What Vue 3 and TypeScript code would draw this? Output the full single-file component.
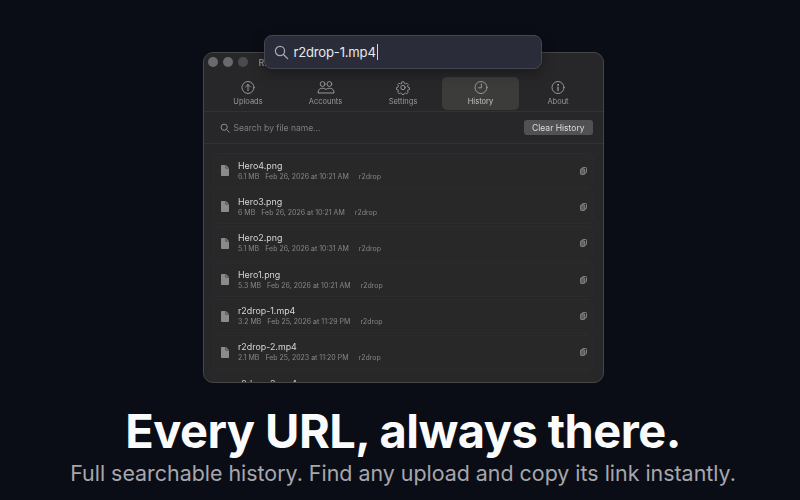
<template>
  <div class="page">
    <div class="stage">
      <div class="spotlight">
        <svg class="spot-icon" width="15" height="15" viewBox="0 0 15 15" fill="none">
          <circle cx="6" cy="6" r="4.6" stroke="#a9abb3" stroke-width="1.2" />
          <path d="M9.5 9.5 13.6 13.6" stroke="#a9abb3" stroke-width="1.3" stroke-linecap="round" />
        </svg>
        <span class="spot-text">r2drop-1.mp4</span><span class="caret"></span>
      </div>

      <div class="window">
        <div class="titlebar">
          <span class="dot"></span>
          <span class="dot"></span>
          <span class="dot dim"></span>
          <span class="win-title">R2Drop</span>
        </div>

        <div class="tabs">
          <div v-for="tab in tabs" :key="tab.label" class="tab" :class="{ active: tab.label === 'History' }">
            <svg width="20" height="15" viewBox="0 0 20 15" fill="none" stroke="#a3a3a5" stroke-width="0.9" stroke-linecap="round" stroke-linejoin="round">
              <template v-if="tab.label === 'Uploads'">
                <circle cx="10" cy="7.5" r="6" />
                <path d="M10 10.8V4.6M7.6 6.9 10 4.5l2.4 2.4" />
              </template>
              <template v-else-if="tab.label === 'Accounts'">
                <circle cx="6.6" cy="4" r="2.4" />
                <circle cx="13.4" cy="4" r="2.4" />
                <path d="M2 12.6c0-3 2-4.4 4.6-4.4 1.4 0 2.6.4 3.4 1.3.8-.9 2-1.3 3.4-1.3 2.6 0 4.6 1.4 4.6 4.4z" />
              </template>
              <template v-else-if="tab.label === 'Settings'">
                <circle cx="10" cy="7.5" r="2.2" />
                <path d="M8.9 1.2h2.2l.4 1.7 1.3.6 1.6-.8 1.5 1.6-.9 1.5.5 1.3 1.7.5v2.1l-1.7.5-.5 1.2.8 1.5-1.5 1.5-1.5-.8-1.3.5-.4 1.2H8.9l-.4-1.2-1.3-.5-1.5.8-1.5-1.5.8-1.5-.5-1.2-1.7-.5V7.6l1.7-.5.5-1.3-.9-1.5 1.5-1.6 1.6.8 1.3-.6z" transform="translate(1 .75) scale(.9)" />
              </template>
              <template v-else-if="tab.label === 'History'">
                <circle cx="10" cy="7.5" r="6" />
                <path d="M10.4 3.9v3.9H7.6" />
              </template>
              <template v-else>
                <circle cx="10" cy="7.5" r="6" />
                <path d="M10 7v3.6" stroke-width="1.2" />
                <circle cx="10" cy="4.8" r=".5" fill="#a3a3a5" />
              </template>
            </svg>
            <span class="tab-label">{{ tab.label }}</span>
          </div>
        </div>

        <div class="searchbar">
          <svg width="10" height="10" viewBox="0 0 10 10" fill="none" stroke="#8f8f91" stroke-width="1">
            <circle cx="4.2" cy="4.2" r="3.1" />
            <path d="M6.5 6.5 9.2 9.2" stroke-linecap="round" />
          </svg>
          <span class="search-hint">Search by file name...</span>
          <span class="clear-btn">Clear History</span>
        </div>

        <div class="list">
          <div v-for="file in files" :key="file.name" class="row">
            <svg class="file-icon" width="8" height="11" viewBox="0 0 8 11">
              <path d="M.8 0H5l3 3v7.2a.8.8 0 0 1-.8.8H.8a.8.8 0 0 1-.8-.8V.8A.8.8 0 0 1 .8 0z" fill="#8b8b8d" />
              <path d="M4.8 0v3.2H8" fill="none" stroke="#3a3a3c" stroke-width=".7" />
            </svg>
            <div class="file-info">
              <div class="file-name">{{ file.name }}</div>
              <div class="file-meta">
                <span>{{ file.size }}</span>
                <span>{{ file.date }}</span>
                <span class="bucket">r2drop</span>
              </div>
            </div>
            <svg class="copy-icon" width="7" height="8" viewBox="0 0 8 9">
              <rect x="2.6" y="0.5" width="4.9" height="6.2" rx="1" fill="none" stroke="#909092" stroke-width="1" />
              <rect x="0.5" y="2" width="5" height="6.5" rx="1" fill="#5f5f62" stroke="#9a9a9c" stroke-width=".8" />
            </svg>
          </div>
        </div>
      </div>
    </div>

    <h1 class="headline">Every URL, always there.</h1>
    <p class="subline">Full searchable history. Find any upload and copy its link instantly.</p>
  </div>
</template>

<script setup lang="ts">
const tabs = [
  { label: 'Uploads' },
  { label: 'Accounts' },
  { label: 'Settings' },
  { label: 'History' },
  { label: 'About' },
];

const files = [
  { name: 'Hero4.png', size: '6.1 MB', date: 'Feb 26, 2026 at 10:21 AM' },
  { name: 'Hero3.png', size: '6 MB', date: 'Feb 26, 2026 at 10:21 AM' },
  { name: 'Hero2.png', size: '5.1 MB', date: 'Feb 26, 2026 at 10:31 AM' },
  { name: 'Hero1.png', size: '5.3 MB', date: 'Feb 26, 2026 at 10:21 AM' },
  { name: 'r2drop-1.mp4', size: '3.2 MB', date: 'Feb 25, 2026 at 11:29 PM' },
  { name: 'r2drop-2.mp4', size: '2.1 MB', date: 'Feb 25, 2023 at 11:20 PM' },
  { name: 'r2drop-3.mp4', size: '2.1 MB', date: 'Feb 25, 2023 at 11:20 PM' },
];
</script>

<style>
html, body { margin: 0; background: #0b0d16; }
</style>

<style scoped>
.page { width: 800px; height: 500px; overflow: hidden; background: #0b0d16; font-family: Inter, "Liberation Sans", sans-serif; display: flex; flex-direction: column; align-items: center; padding-left: 6px; box-sizing: border-box; }

.stage { position: relative; width: 401px; padding-top: 52px; }

.spotlight { position: absolute; z-index: 2; top: 35px; left: 61px; width: 278px; height: 34px; box-sizing: border-box; display: flex; align-items: center; padding-left: 9px; background: #2b2c39; border: 1px solid #45464f; border-radius: 8px; box-shadow: 0 4px 14px rgba(0, 0, 0, 0.35); }
.spot-icon { margin-right: 5px; }
.spot-text { font-size: 13.1px; letter-spacing: -0.2px; color: #e8e8ea; }
.caret { width: 1px; height: 16px; margin-left: 1px; background: #d8d8dc; }

.window { height: 331px; box-sizing: border-box; overflow: hidden; background: #272729; border: 1px solid #47474a; border-radius: 10px; filter: blur(0.3px); }

.titlebar { height: 18px; display: flex; align-items: center; gap: 5px; padding-left: 4px; }
.dot { width: 10px; height: 10px; border-radius: 50%; background: #6a6a6c; }
.dot.dim { background: #4b4b4d; }
.win-title { margin-left: 6px; font-size: 9px; font-weight: 600; color: #8a8a8c; }

.tabs { height: 41px; box-sizing: border-box; display: flex; justify-content: center; gap: 1px; padding: 6px 0 1px; border-bottom: 1px solid #323234; }
.tab { width: 76.5px; box-sizing: border-box; padding-bottom: 2px; display: flex; flex-direction: column; align-items: center; justify-content: center; gap: 2px; border-radius: 5px; }
.tab.active { background: #3c3d3a; }
.tab-label { font-size: 7.5px; color: #99999b; }
.tab.active .tab-label { color: #c3c3c5; }

.searchbar { height: 32px; box-sizing: border-box; display: flex; align-items: center; padding: 0 10px 0 16px; border-bottom: 1px solid #323234; }
.search-hint { margin-left: 4px; flex: 1; font-size: 8.5px; color: #7f7f81; }
.clear-btn { height: 15px; padding: 0 8px; display: flex; align-items: center; border-radius: 3px; background: #515153; font-size: 8.5px; color: #dcdcde; }

.list { padding: 9px 9px 0; display: flex; flex-direction: column; gap: 1.4px; }
.row { flex: none; height: 35px; box-sizing: border-box; display: flex; align-items: center; padding: 0 8px; border: 1px solid #2c2c2e; border-radius: 5px; background: #282829; }
.file-icon { margin: 0 9.5px 0 -1px; }
.file-info { flex: 1; }
.file-name { font-size: 8.9px; line-height: 12px; color: #d6d6d8; }
.file-meta { display: flex; gap: 6px; font-size: 7px; line-height: 10px; color: #87878a; }
.bucket { margin-left: 4px; }
.copy-icon { margin-right: -2px; }

.headline { margin: 19px 0 0; font-size: 47px; line-height: 58px; font-weight: 700; letter-spacing: -0.55px; color: #fbfbfc; white-space: nowrap; }
.subline { margin: 1px 0 0; font-size: 21.4px; line-height: 24px; font-weight: 400; color: #a6a7ac; white-space: nowrap; }
</style>
